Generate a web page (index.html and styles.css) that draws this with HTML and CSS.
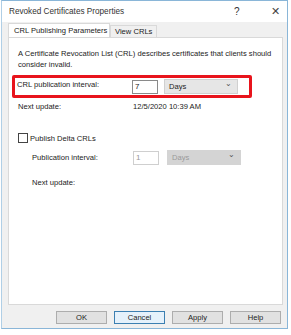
FILE: index.html
```html
<!DOCTYPE html>
<html lang="en">
<head>
    <meta charset="UTF-8">
    <title>Revoked Certificates Properties</title>
    <link rel="stylesheet" href="styles.css">
</head>
<body>
    <div class="window">
        <div class="titlebar">
            <span class="title">Revoked Certificates Properties</span>
            <span class="help">?</span>
            <span class="close">&#x2715;</span>
        </div>
        <div class="dialog">
            <div class="tabs">
                <div class="tab active">CRL Publishing Parameters</div>
                <div class="tab">View CRLs</div>
            </div>
            <div class="panel">
                <p class="intro">A Certificate Revocation List (CRL) describes certificates that clients should consider invalid.</p>

                <div class="row highlight">
                    <span class="label">CRL publication interval:</span>
                    <span class="field">7</span>
                    <span class="dropdown">Days <span class="chev">&#x2304;</span></span>
                </div>
                <div class="row">
                    <span class="label">Next update:</span>
                    <span class="value">12/5/2020 10:39 AM</span>
                </div>

                <div class="check">
                    <span class="box"></span>
                    <span>Publish Delta CRLs</span>
                </div>
                <div class="row indent">
                    <span class="label">Publication interval:</span>
                    <span class="field disabled">1</span>
                    <span class="dropdown disabled">Days <span class="chev">&#x2304;</span></span>
                </div>
                <div class="row indent">
                    <span class="label">Next update:</span>
                </div>
            </div>
            <div class="buttons">
                <button>OK</button>
                <button class="default">Cancel</button>
                <button>Apply</button>
                <button>Help</button>
            </div>
        </div>
    </div>
</body>
</html>
```

FILE: styles.css
```css
body {
    margin: 0;
    background: #fff;
    font-family: "Liberation Sans", Arial, sans-serif;
    font-size: 7.6px;
    color: #222;
}

.window {
    margin-left: 1px;
    width: 285px;
    height: 327px;
    border: 1px solid #8ab6d8;
    border-left-color: #b0cfe6;
    display: flex;
    flex-direction: column;
}

.titlebar {
    flex-shrink: 0;
    height: 21px;
    display: flex;
    align-items: center;
    padding-left: 7px;
    background: #fff;
    font-size: 8.2px;
    color: #333;
}

.title {
    flex: 1;
}

.help {
    width: 37px;
    font-size: 10px;
}

.close {
    width: 16px;
    font-size: 11px;
    color: #444;
}

.dialog {
    flex: 1;
    background: #f0f0f0;
    padding: 1px 4px 4px 6px;
    display: flex;
    flex-direction: column;
}

.tabs {
    flex-shrink: 0;
    display: flex;
    align-items: flex-end;
    height: 14px;
}

.tab {
    padding: 0 4px;
    height: 11px;
    line-height: 11px;
    white-space: nowrap;
    border: 1px solid #d9d9d9;
    border-bottom: none;
    background: #f0f0f0;
}

.tab.active {
    width: 90px;
    text-align: center;
    height: 13px;
    line-height: 13px;
    background: #fff;
    padding: 0 5px;
}

.panel {
    flex-shrink: 0;
    height: 256px;
    background: #fff;
    border: 1px solid #d9d9d9;
    padding: 10px 10px 0 9px;
}

.intro {
    margin: 0 0 5px 0;
    line-height: 11px;
}

.row {
    display: flex;
    align-items: center;
    height: 14px;
}

.row .label {
    width: 115px;
}

.highlight {
    margin: 0 0 1px -6px;
    width: 232px;
    height: 17px;
    padding-left: 2px;
    border: 3px solid #e8141c;
    border-radius: 2px;
}

.highlight .label {
    align-self: flex-start;
    padding-top: 2px;
}

.field {
    width: 22px;
    height: 12px;
    line-height: 12px;
    padding-left: 2px;
    border: 1px solid #8a8a8a;
    margin-right: 6px;
    font-size: 8px;
}

.dropdown {
    width: 68px;
    height: 13px;
    line-height: 13px;
    padding-left: 4px;
    background: #e6e6e6;
    border: 1px solid #d0d0d0;
    display: flex;
    justify-content: space-between;
}

.chev {
    padding-right: 5px;
    line-height: 8px;
    color: #555;
}

.field.disabled {
    border-color: #cfcfcf;
    color: #999;
}

.dropdown.disabled {
    background: #d4d4d4;
    border-color: #d4d4d4;
    color: #9a9a9a;
    margin-left: 2px;
}

.check {
    display: flex;
    align-items: center;
    margin-top: 20px;
    height: 10px;
    gap: 2px;
}

.box {
    width: 8px;
    height: 8px;
    border: 1px solid #444;
    background: #fff;
}

.indent {
    padding-left: 14px;
    height: 25px;
}

.check + .indent {
    margin-top: 2px;
}

.indent .label {
    width: 101px;
}

.buttons {
    flex-shrink: 0;
    display: flex;
    justify-content: flex-end;
    gap: 7px;
    margin-top: 6px;
    padding-right: 2px;
}

button {
    width: 51px;
    height: 13px;
    padding: 0;
    font-family: inherit;
    font-size: 7.6px;
    color: #222;
    background: #e1e1e1;
    border: 1px solid #adadad;
}

button.default {
    border-color: #3c7fb1;
    background: #e5f1fb;
}
```
